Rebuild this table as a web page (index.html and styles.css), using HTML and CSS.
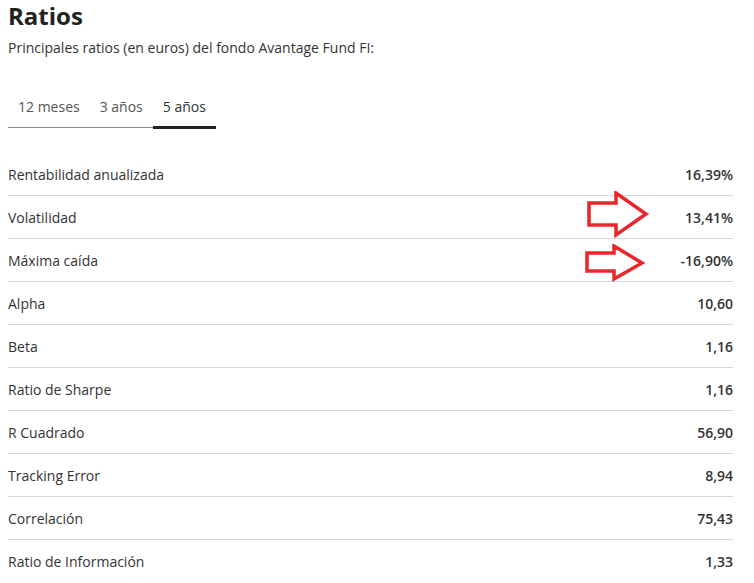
FILE: index.html
```html
<!DOCTYPE html>
<html lang="es">
<head>
    <meta charset="UTF-8">
    <meta name="viewport" content="width=device-width, initial-scale=1.0">
    <title>Ratios</title>
    <link rel="stylesheet" href="styles.css">
</head>
<body>

<div class="ratios">
    <h2>Ratios</h2>
    <p class="intro">Principales ratios (en euros) del fondo Avantage Fund FI:</p>

    <div class="tabs">
        <span class="tab">12 meses</span>
        <span class="tab">3 años</span>
        <span class="tab active">5 años</span>
    </div>

    <div class="table">
        <div class="row"><span>Rentabilidad anualizada</span><span class="value">16,39%</span></div>
        <div class="row"><span>Volatilidad</span><span class="value">13,41%</span></div>
        <div class="row"><span>Máxima caída</span><span class="value">-16,90%</span></div>
        <div class="row"><span>Alpha</span><span class="value">10,60</span></div>
        <div class="row"><span>Beta</span><span class="value">1,16</span></div>
        <div class="row"><span>Ratio de Sharpe</span><span class="value">1,16</span></div>
        <div class="row"><span>R Cuadrado</span><span class="value">56,90</span></div>
        <div class="row"><span>Tracking Error</span><span class="value">8,94</span></div>
        <div class="row"><span>Correlación</span><span class="value">75,43</span></div>
        <div class="row"><span>Ratio de Información</span><span class="value">1,33</span></div>

        <!-- hand-drawn annotation arrows -->
        <svg class="arrow arrow-1" width="64" height="48" viewBox="0 0 64 48">
            <path d="M3 12 H30 V2 L60 23 L30 44 V34 H3 Z" fill="#fff" stroke="#e8262b" stroke-width="3.5" stroke-linejoin="miter"/>
        </svg>
        <svg class="arrow arrow-2" width="62" height="40" viewBox="0 0 62 40">
            <path d="M3 9 H30 V2 L58 19 L30 35 V27 H3 Z" fill="#fff" stroke="#e8262b" stroke-width="3.5" stroke-linejoin="miter"/>
        </svg>
    </div>
</div>

</body>
</html>
```

FILE: styles.css
```css
body {
    font-family: "Open Sans", "Noto Sans", Arial, sans-serif;
    margin: 0;
    background: #fff;
    color: #333;
}
.ratios {
    width: 725px;
    padding: 0 0 0 8px;
}
h2 {
    font-size: 24px;
    font-weight: 700;
    margin: 0;
    padding-top: 2px;
    line-height: 28px;
    color: #222;
}
.intro {
    font-size: 14px;
    margin: 8px 0 0;
    line-height: 20px;
    color: #333;
}
.tabs {
    display: inline-flex;
    margin-top: 39px;
    border-bottom: 1px solid #888;
}
.tab {
    font-size: 14px;
    color: #555;
    padding: 0 10px 9px;
    line-height: 20px;
    margin-bottom: -2px;
    border-bottom: 3px solid transparent;
}
.tab.active {
    color: #333;
    border-bottom-color: #222;
}
.table {
    position: relative;
    margin-top: 25px;
}
.row {
    display: flex;
    justify-content: space-between;
    align-items: center;
    height: 42px;
    font-size: 14px;
    border-bottom: 1px solid #d6d8e0;
}
.row:last-of-type {
    border-bottom: none;
}
.value {
    font-weight: 600;
    color: #333;
}
.arrow {
    position: absolute;
}
.arrow-1 {
    left: 578px;
    top: 38px;
}
.arrow-2 {
    left: 576px;
    top: 91px;
}
```
